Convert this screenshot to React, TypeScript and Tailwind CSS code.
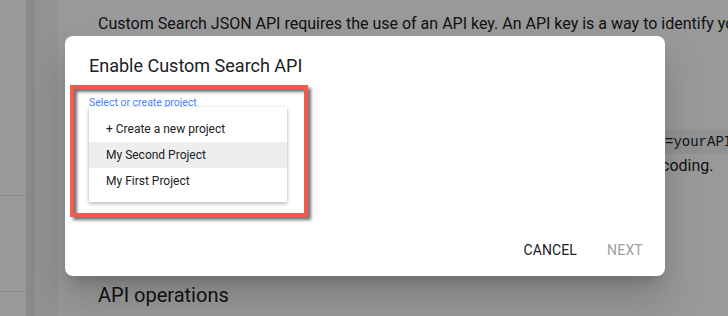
import React from "react";

const font = "font-['Roboto','Liberation_Sans',sans-serif]";

function BackgroundPage() {
  return (
    <div className={`flex h-[316px] w-[728px] overflow-hidden bg-white text-[#202124] ${font}`}>
      <aside className="w-[26px] shrink-0 bg-white">
        <div className="h-[195px]" />
        <div className="h-px bg-[#e6e6e6]" />
        <div className="h-[95px]" />
        <div className="h-px bg-[#e6e6e6]" />
      </aside>
      <div className="w-[9px] shrink-0 bg-[#e6e6e6]" />
      <div className="w-[23px] shrink-0 bg-[#f4f4f4]" />
      <main className="flex-1 pl-[40px] pt-[12px]">
        <p className="whitespace-nowrap text-[16px] leading-[24px]">
          Custom Search JSON API requires the use of an API key. An API key is a way to identify your client to Google.
        </p>
        {/* rest of the paragraph sits behind the dialog */}
        <div className="h-[24px]" />
        <div className="mt-[70px] flex whitespace-nowrap text-[16px] leading-[24px]">
          <div className="w-[567px] shrink-0" />
          <code className="bg-[#f1f3f4] font-['Liberation_Mono',monospace] text-[14px]">=yourAPIKey</code>
        </div>
        <div className="flex whitespace-nowrap text-[16px] leading-[24px]">
          <div className="w-[563px] shrink-0" />
          <span>coding.</span>
        </div>
        <h2 className="mt-[103px] text-[20px] leading-[28px]">API operations</h2>
      </main>
    </div>
  );
}

function ProjectMenu() {
  const items = [
    { label: "+ Create a new project", active: false },
    { label: "My Second Project", active: true },
    { label: "My First Project", active: false },
  ];
  return (
    <div className="relative -mt-[4px] w-[198px] bg-white py-[8px] shadow-[0_2px_4px_rgba(0,0,0,0.25),0_0_2px_rgba(0,0,0,0.12)]">
      {items.map((it, i) => (
        <div
          key={it.label}
          className={`flex items-center pl-[17px] text-[12px] text-[#202124] ${i === 0 ? "h-[27px]" : "h-[26px]"} ${it.active ? "bg-[#eeeeee]" : ""}`}
        >
          {it.label}
        </div>
      ))}
    </div>
  );
}

function EnableDialog() {
  return (
    <div className={`absolute left-[65px] top-[36px] flex h-[240px] w-[600px] flex-col rounded-[8px] bg-white shadow-[0_11px_15px_-7px_rgba(0,0,0,0.2),0_24px_38px_3px_rgba(0,0,0,0.14)] ${font}`}>
      <h1 className="px-[24px] pt-[16px] text-[18px] leading-[28px] text-[#202124]">
        Enable Custom Search API
      </h1>
      <div className="mt-[15px] pl-[24px]">
        <label className="block text-[10.5px] leading-[16px] text-[#4a86f5]">
          Select or create project
        </label>
        <ProjectMenu />
      </div>
      <div className="mt-auto flex justify-end gap-[8px] p-[8px]">
        <button className="h-[36px] min-w-[64px] px-[8px] text-[14px] tracking-[0.1px] text-[#202124]">
          CANCEL
        </button>
        <button className="h-[36px] min-w-[64px] px-[8px] text-[14px] tracking-[0.2px] text-[#a0a0a0]">
          NEXT
        </button>
      </div>
      {/* annotation frame */}
      <div className="pointer-events-none absolute left-[5px] top-[49px] h-[132px] w-[238px] border-[4px] border-[#f25a4a] shadow-[3px_3px_3px_rgba(0,0,0,0.55),inset_3px_3px_3px_rgba(0,0,0,0.55)]" />
    </div>
  );
}

export default function App() {
  return (
    <div className="relative h-[316px] w-[728px] overflow-hidden">
      <BackgroundPage />
      <div className="absolute inset-0 bg-black/40" />
      <EnableDialog />
    </div>
  );
}
